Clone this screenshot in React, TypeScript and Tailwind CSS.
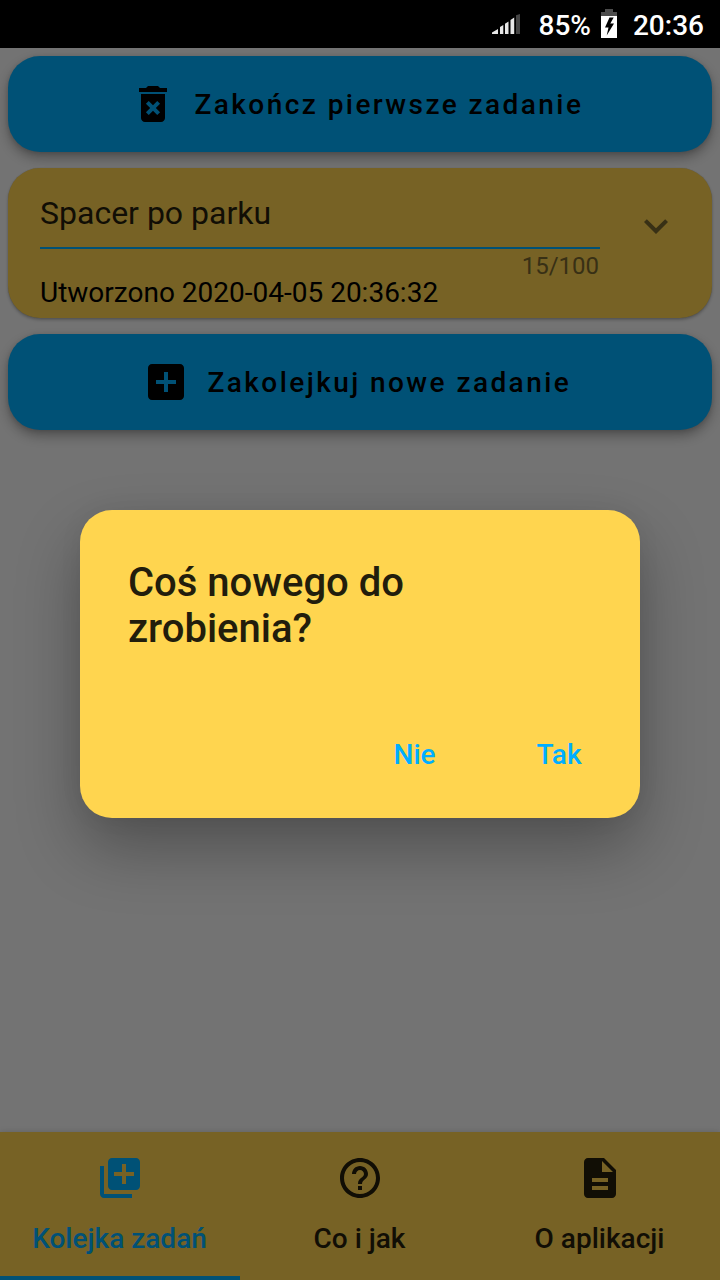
import type { ReactNode } from "react";

const paths = {
  remove:
    "M6 19c0 1.1.9 2 2 2h8c1.1 0 2-.9 2-2V7H6v12zm2.46-7.12l1.41-1.41L12 12.59l2.12-2.12 1.41 1.41L13.41 14l2.12 2.12-1.41 1.41L12 15.41l-2.12 2.12-1.41-1.41L10.59 14l-2.13-2.12zM15.5 4l-1-1h-5l-1 1H5v2h14V4z",
  add: "M19 3H5c-1.11 0-2 .9-2 2v14c0 1.1.89 2 2 2h14c1.1 0 2-.9 2-2V5c0-1.1-.9-2-2-2zm-2 10h-4v4h-2v-4H7v-2h4V7h2v4h4v2z",
  expand: "M16.59 8.59L12 13.17 7.41 8.59 6 10l6 6 6-6z",
  queue:
    "M4 6H2v14c0 1.1.9 2 2 2h14v-2H4V6zm16-4H8c-1.1 0-2 .9-2 2v12c0 1.1.9 2 2 2h12c1.1 0 2-.9 2-2V4c0-1.1-.9-2-2-2zm-1 9h-4v4h-2v-4H9V9h4V5h2v4h4v2z",
  help: "M11 18h2v-2h-2v2zm1-16C6.48 2 2 6.48 2 12s4.48 10 10 10 10-4.48 10-10S17.52 2 12 2zm0 18c-4.41 0-8-3.59-8-8s3.59-8 8-8 8 3.59 8 8-3.59 8-8 8zm0-14c-2.21 0-4 1.79-4 4h2c0-1.1.9-2 2-2s2 .9 2 2c0 2-3 1.75-3 5h2c0-2.25 3-2.5 3-5 0-2.21-1.79-4-4-4z",
  document:
    "M14 2H6c-1.1 0-1.99.9-1.99 2L4 20c0 1.1.89 2 1.99 2H18c1.1 0 2-.9 2-2V8l-6-6zm2 16H8v-2h8v2zm0-4H8v-2h8v2zm-3-5V3.5L18.5 9H13z",
};

function Icon({ d, className = "" }: { d: string; className?: string }) {
  return (
    <svg viewBox="0 0 24 24" className={`block shrink-0 fill-current ${className}`}>
      <path d={d} />
    </svg>
  );
}

function StatusBar() {
  return (
    <header className="flex h-12 shrink-0 items-center justify-end bg-black pr-4 text-[28px] font-medium leading-[33px] text-white">
      <svg viewBox="0 0 28 20" className="mr-[19px] h-5 w-7">
        <path d="M0 20v-1.5L6 15v5z M8 13l3.300-2V20H8z M13 9.800l3.500-2.200V20H13z M18.500 6l3.700-2.500V20h-3.700z" fill="#e8e8e8" />
        <path d="M24 1.300l4-1.300v20h-4z" fill="#454545" />
      </svg>
      <span className="pt-[2px]">85%</span>
      <svg viewBox="0 0 16 30" className="ml-[10px] mr-4 h-[30px] w-4">
        <path d="M4 0h8v3h4v4H0V3h4z" fill="#4c4c4c" />
        <path d="M0 7h16v22H0z" fill="#fff" />
        <path d="M8.500 8.500L4 18.500h3.500L5.700 26.500L13 14.500H9.300L12.700 8.500z" fill="#000" />
      </svg>
      <span className="pt-[2px]">20:36</span>
    </header>
  );
}

function TaskButton({ icon, children, className }: { icon: string; children: ReactNode; className: string }) {
  return (
    <button
      className={`flex h-24 w-full shrink-0 items-center rounded-[32px] bg-[#005176] text-[28px] font-medium tracking-[2.43px] text-black shadow-[0_6px_12px_rgba(0,0,0,0.3),0_1px_4px_rgba(0,0,0,0.12)] ${className}`}
    >
      <Icon d={icon} className="mr-[17.5px] h-12 w-12" />
      <span className="whitespace-nowrap pt-0.5">{children}</span>
    </button>
  );
}

function TaskCard() {
  return (
    <section className="flex h-[150px] shrink-0 rounded-[32px] bg-[#776225] pl-8 shadow-[0_2px_3px_rgba(0,0,0,0.25),0_0_1px_rgba(0,0,0,0.2)]">
      <div className="flex w-[560px] flex-col">
        <div className="h-[81px] border-b-2 border-[#005176] pt-[26px] text-[32px] leading-[38px] text-[#110e05]">Spacer po parku</div>
        <div className="mt-[3px] flex h-7 items-center justify-end pr-px text-[24px] text-[#383015]">15/100</div>
        <div className="-mt-[4px] text-[28px] leading-[33px] text-black">Utworzono 2020-04-05 20:36:32</div>
      </div>
      <Icon d={paths.expand} className="ml-8 mt-[34px] h-12 w-12 text-[#383015]" />
    </section>
  );
}

function Tab({ icon, label, active = false }: { icon: string; label: string; active?: boolean }) {
  return (
    <button className={`flex h-full w-60 flex-col items-center border-b-4 pt-[22px] text-[28px] font-medium leading-[33px] ${active ? "border-[#005176] text-[#005176]" : "border-transparent text-[#110e05]"}`}>
      <Icon d={icon} className="h-12 w-12" />
      <span className="mt-5 pr-px">{label}</span>
    </button>
  );
}

function Dialog() {
  return (
    <div role="dialog" className="absolute left-20 top-[510px] flex h-[308px] w-[560px] flex-col rounded-[32px] bg-[#ffd54f] px-12 pt-[50px] shadow-[0_30px_64px_rgba(0,0,0,0.3),0_0_24px_rgba(0,0,0,0.05)]">
      <h1 className="w-[340px] text-[40px] font-medium leading-[46px] text-[#221d0c]">Coś nowego do zrobienia?</h1>
      <div className="mt-[86px] flex justify-end pr-[10.5px] text-[28px] font-medium leading-[33px] text-[#00aeff]">
        <button className="mr-[101px]">Nie</button>
        <button>Tak</button>
      </div>
    </div>
  );
}

export default function App() {
  return (
    <div className="relative flex h-[1280px] w-[720px] flex-col overflow-hidden bg-[#737373] font-['Roboto',sans-serif]">
      <StatusBar />
      <main className="flex grow flex-col gap-4 p-2">
        <TaskButton icon={paths.remove} className="pl-[121px]">Zakończ pierwsze zadanie</TaskButton>
        <TaskCard />
        <TaskButton icon={paths.add} className="pl-[134px]">Zakolejkuj nowe zadanie</TaskButton>
      </main>
      <nav className="flex h-[148px] shrink-0 bg-[#776225] shadow-[0_0_6px_rgba(0,0,0,0.15)]">
        <Tab icon={paths.queue} label="Kolejka zadań" active />
        <Tab icon={paths.help} label="Co i jak" />
        <Tab icon={paths.document} label="O aplikacji" />
      </nav>
      <Dialog />
    </div>
  );
}
